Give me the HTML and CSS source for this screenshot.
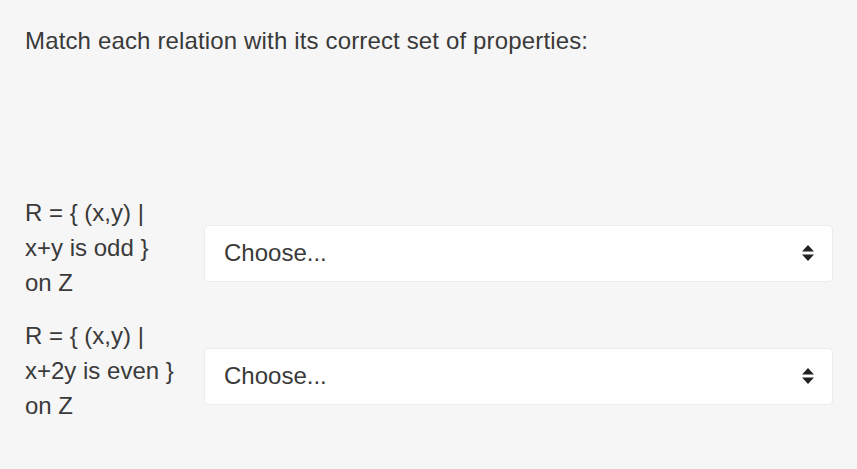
FILE: index.html
```html
<!DOCTYPE html>
<html>
<head>
<meta charset="utf-8">
<link rel="stylesheet" href="styles.css">
</head>
<body>
<div class="page">
  <p class="prompt">Match each relation with its correct set of properties:</p>
  <div class="rows">
    <div class="row">
      <div class="label">R = { (x,y) |<br>x+y is odd }<br>on Z</div>
      <div class="select">
        <span class="value">Choose...</span>
        <svg class="arrows" width="14" height="18" viewBox="0 0 14 18"><path d="M7 1 L13 7.5 H1 Z M1 10.5 H13 L7 17 Z" fill="#222"/></svg>
      </div>
    </div>
    <div class="row">
      <div class="label">R = { (x,y) |<br>x+2y is even }<br>on Z</div>
      <div class="select">
        <span class="value">Choose...</span>
        <svg class="arrows" width="14" height="18" viewBox="0 0 14 18"><path d="M7 1 L13 7.5 H1 Z M1 10.5 H13 L7 17 Z" fill="#222"/></svg>
      </div>
    </div>
  </div>
</div>
</body>
</html>
```
FILE: styles.css
```css
html, body {
  margin: 0;
  padding: 0;
  background: #f6f6f6;
}
.page {
  width: 857px;
  height: 469px;
  box-sizing: border-box;
  padding: 26px 24px 0 25px;
  font-family: "Liberation Sans", Arial, sans-serif;
  color: #3a3a3a;
  font-size: 24px;
}
.prompt {
  margin: 0;
  line-height: 30px;
  letter-spacing: 0.15px;
}
.rows {
  margin-top: 139px;
  display: flex;
  flex-direction: column;
  gap: 18px;
}
.row {
  display: flex;
  align-items: center;
}
.label {
  width: 179px;
  flex: none;
  line-height: 35px;
}
.select {
  flex: 1;
  height: 57px;
  margin-top: 11px;
  box-sizing: border-box;
  background: #fff;
  border: 1px solid #ececec;
  border-radius: 4px;
  display: flex;
  align-items: center;
  justify-content: space-between;
  padding: 0 17px 0 19px;
}
.value {
  color: #3a3a3a;
}
.arrows {
  display: block;
}
```
